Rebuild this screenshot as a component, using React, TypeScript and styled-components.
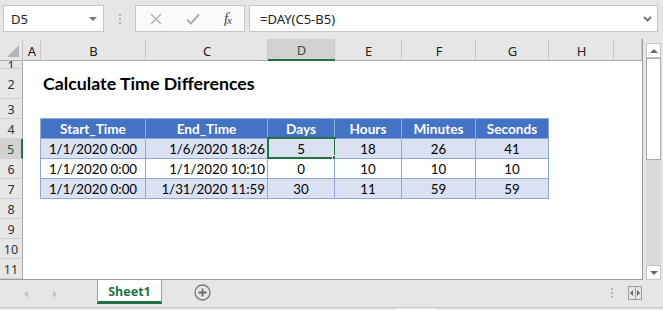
import React from "react";
import styled, { createGlobalStyle, css } from "styled-components";

const GREEN = "#217346";
const UI_FONT = `"Noto Sans", "Open Sans", sans-serif`;
const CELL_FONT = `Lato, "Liberation Sans", sans-serif`;
const GRID_COLS = "23px 18px 105px 122px 67px 67px 74px 73px 65px 1fr";

const GlobalStyle = createGlobalStyle`
	html, body {
		margin: 0;
		padding: 0;
		background: #e6e6e6;
		overflow: hidden;
	}
`;

const Window = styled.div`
	width: 663px;
	height: 310px;
	background: #e6e6e6;
	display: flex;
	flex-direction: column;
	font-family: ${UI_FONT};
`;

/* ---------- formula bar ---------- */

const FormulaBar = styled.div`
	height: 40px;
	box-sizing: border-box;
	padding: 5px 5px 0 3px;
	display: flex;
	align-items: flex-start;
`;

const Field = styled.div`
	height: 27px;
	box-sizing: border-box;
	background: #fff;
	border: 1px solid #c6c6c6;
	display: flex;
	align-items: center;
`;

const NameBox = styled(Field)`
	width: 101px;
	padding: 0 6px 0 7px;
	justify-content: space-between;
	font-size: 13px;
	color: #222;
`;

const Grip = styled.div`
	width: 31px;
	height: 27px;
	display: flex;
	flex-direction: column;
	align-items: center;
	justify-content: center;
	gap: 2px;
	span {
		width: 2px;
		height: 2px;
		background: #b4b4b4;
	}
`;

const FxBox = styled(Field)`
	width: 110px;
	background: #fafafa;
	padding: 0 13px 0 14px;
	justify-content: space-between;
`;

const FxLabel = styled.span`
	font-family: "Liberation Serif", serif;
	font-style: italic;
	font-size: 15px;
	color: #444;
	letter-spacing: -1px;
	sub {
		font-size: 11px;
		vertical-align: -1px;
	}
`;

const FormulaInput = styled(Field)`
	flex: 1;
	margin-left: 4px;
	padding: 0 5px 0 10px;
	justify-content: space-between;
	font-size: 13px;
	color: #222;
`;

/* ---------- sheet ---------- */

const Body = styled.div`
	display: flex;
	height: 241px;
`;

const Sheet = styled.div`
	width: 643px;
	box-sizing: border-box;
	border-right: 1px solid #9b9b9b;
	border-bottom: 1px solid #9b9b9b;
	background: #fff;
	display: flex;
	flex-direction: column;
	overflow: hidden;
`;

const Line = styled.div<{ $h: number }>`
	display: grid;
	grid-template-columns: ${GRID_COLS};
	height: ${p => p.$h}px;
	flex: none;
`;

const ColHead = styled.div<{ $sel?: boolean }>`
	background: ${p => (p.$sel ? "#d2d2d2" : "#e6e6e6")};
	box-sizing: border-box;
	border-bottom: ${p => (p.$sel ? `2px solid ${GREEN}` : "1px solid #ababab")};
	box-shadow: inset -1px 0 0 #c8c8c8;
	display: flex;
	align-items: center;
	justify-content: center;
	font-size: 13px;
	color: ${p => (p.$sel ? "#1c5a34" : "#222")};
	padding-top: 2px;
`;

const Corner = styled.div`
	background: #e6e6e6;
	box-sizing: border-box;
	border-bottom: 1px solid #ababab;
	border-right: 1px solid #c8c8c8;
	display: flex;
	align-items: flex-end;
	justify-content: flex-end;
	padding: 0 3px 3px 0;
`;

const RowHead = styled.div<{ $sel?: boolean }>`
	background: ${p => (p.$sel ? "#d2d2d2" : "#e6e6e6")};
	box-sizing: border-box;
	border-bottom: 1px solid #d0d0d0;
	border-right: ${p => (p.$sel ? `2px solid ${GREEN}` : "1px solid #ababab")};
	display: flex;
	align-items: center;
	justify-content: center;
	overflow: hidden;
	font-size: 12.5px;
	color: ${p => (p.$sel ? "#1c5a34" : "#333")};
	padding-top: 1px;
`;

const Blank = styled.div``;

const Title = styled.div`
	grid-column: 3 / span 3;
	display: flex;
	align-items: flex-end;
	padding: 0 0 5px 2px;
	white-space: nowrap;
	font-family: ${CELL_FONT};
	font-weight: 700;
	font-size: 17.8px;
	color: #000;
`;

const Cell = styled.div<{
	$align?: "center" | "right";
	$head?: boolean;
	$band?: boolean;
	$first?: boolean;
}>`
	position: relative;
	box-sizing: border-box;
	display: flex;
	align-items: center;
	justify-content: ${p => (p.$align === "right" ? "flex-end" : "center")};
	padding: 1px 2px 0 2px;
	white-space: nowrap;
	font-family: ${CELL_FONT};
	font-size: 13.3px;
	color: #000;
	background: ${p => (p.$head ? "#4472c4" : p.$band ? "#d9e1f2" : "#fff")};
	border-right: 1px solid #8ea9db;
	border-bottom: 1px solid #8ea9db;
	${p =>
		p.$head &&
		css`
			color: #fff;
			font-weight: 700;
			font-size: 13.6px;
		`}
	${p =>
		p.$first &&
		css`
			box-shadow: -1px 0 0 #8ea9db;
		`}
	${p =>
		p.$head &&
		p.$first &&
		css`
			box-shadow: -1px 0 0 #8ea9db, 0 -1px 0 #8ea9db, -1px -1px 0 #8ea9db;
		`}
	${p =>
		p.$head &&
		!p.$first &&
		css`
			box-shadow: 0 -1px 0 #8ea9db;
		`}
`;

const Selection = styled.div`
	position: absolute;
	left: -1px;
	right: -2px;
	top: -2px;
	bottom: -1px;
	border: 2px solid ${GREEN};
	pointer-events: none;
`;

const FillHandle = styled.div`
	position: absolute;
	right: -5px;
	bottom: -5px;
	width: 5px;
	height: 5px;
	background: ${GREEN};
	border: 1px solid #fff;
`;

/* ---------- scrollbar ---------- */

const ScrollCol = styled.div`
	flex: 1;
	padding: 4px 2px 0 3px;
	display: flex;
	flex-direction: column;
`;

const ScrollBtn = styled.div`
	height: 15px;
	box-sizing: border-box;
	background: #fff;
	border: 1px solid #c6c6c6;
	display: flex;
	align-items: center;
	justify-content: center;
	flex: none;
`;

const Track = styled.div`
	flex: 1;
	background: #dadada;
	display: flex;
	flex-direction: column;
	justify-content: space-between;
`;

const Thumb = styled.div`
	height: 102px;
	box-sizing: border-box;
	background: #fff;
	border: 1px solid #ababab;
`;

/* ---------- tabs ---------- */

const TabBar = styled.div`
	height: 27px;
	display: flex;
	align-items: stretch;
	padding-left: 20px;
	border-bottom: 1px solid #c6c6c6;
`;

const NavArrows = styled.div`
	width: 77px;
	display: flex;
	align-items: center;
	gap: 25px;
	padding-left: 4px;
	box-sizing: border-box;
`;

const Tab = styled.div`
	width: 65px;
	height: 24px;
	box-sizing: border-box;
	background: #fff;
	border-left: 1px solid #a0a0a0;
	border-right: 1px solid #a0a0a0;
	border-bottom: 3px solid ${GREEN};
	display: flex;
	align-items: center;
	justify-content: center;
	font-size: 12.5px;
	font-weight: 700;
	color: ${GREEN};
	padding-top: 1px;
`;

const AddSheet = styled.div`
	width: 80px;
	display: flex;
	align-items: center;
	justify-content: center;
	padding-bottom: 2px;
`;

const TabSpacer = styled.div`
	flex: 1;
`;

const TabTools = styled.div`
	display: flex;
	align-items: center;
	gap: 15px;
	padding-right: 21px;
	padding-bottom: 2px;
`;

const Dots = styled.div`
	display: flex;
	flex-direction: column;
	gap: 2px;
	span {
		width: 2px;
		height: 2px;
		background: #b4b4b4;
	}
`;

const SplitBox = styled.div`
	width: 14px;
	height: 14px;
	box-sizing: border-box;
	border: 1px solid #a0a0a0;
	display: flex;
	align-items: center;
	justify-content: space-between;
	padding: 0 1px;
`;

const SplitBar = styled.span`
	width: 1px;
	height: 12px;
	background: #a0a0a0;
`;

const BottomStrip = styled.div`
	height: 2px;
	display: flex;
	span {
		margin-left: 396px;
		width: 40px;
		background: #f2f2f2;
	}
`;

/* ---------- data ---------- */

const COLUMNS = ["A", "B", "C", "D", "E", "F", "G", "H", ""];
const HEADERS = ["Start_Time", "End_Time", "Days", "Hours", "Minutes", "Seconds"];
const DATA = [
	["1/1/2020 0:00", "1/6/2020 18:26", "5", "18", "26", "41"],
	["1/1/2020 0:00", "1/1/2020 10:10", "0", "10", "10", "10"],
	["1/1/2020 0:00", "1/31/2020 11:59", "30", "11", "59", "59"],
];

const Tri = ({ dir, color, size = 4 }: { dir: "up" | "down" | "left" | "right"; color: string; size?: number }) => {
	const pts = {
		up: `0,${size} ${size},0 ${size * 2},${size}`,
		down: `0,0 ${size * 2},0 ${size},${size}`,
		left: `${size},0 ${size},${size * 2} 0,${size}`,
		right: `0,0 0,${size * 2} ${size},${size}`,
	}[dir];
	const horiz = dir === "up" || dir === "down";
	return (
		<svg width={horiz ? size * 2 : size} height={horiz ? size : size * 2} style={{ flex: "none" }}>
			<polygon points={pts} fill={color} />
		</svg>
	);
};

const TableRow = ({ n, values, band, selCol }: { n: number; values: string[]; band?: boolean; selCol?: number }) => (
	<Line $h={20}>
		<RowHead $sel={selCol !== undefined}>{n}</RowHead>
		<Blank />
		{values.map((v, i) => (
			<Cell key={i} $band={band} $first={i === 0} $align={i === 1 ? "right" : "center"}>
				{v}
				{selCol === i && (
					<Selection>
						<FillHandle />
					</Selection>
				)}
			</Cell>
		))}
	</Line>
);

export default function App() {
	return (
		<Window>
			<GlobalStyle />
			<FormulaBar>
				<NameBox>
					<span>D5</span>
					<Tri dir="down" color="#777" size={4} />
				</NameBox>
				<Grip>
					<span />
					<span />
					<span />
				</Grip>
				<FxBox>
					<svg width="12" height="12" viewBox="0 0 12 12">
						<path d="M1 1 L11 11 M11 1 L1 11" stroke="#b0b0b0" strokeWidth="1.4" />
					</svg>
					<svg width="14" height="12" viewBox="0 0 14 12">
						<path d="M1 6.5 L5 10.5 L13 1.5" stroke="#b0b0b0" strokeWidth="2" fill="none" />
					</svg>
					<FxLabel>
						f<sub>x</sub>
					</FxLabel>
				</FxBox>
				<FormulaInput>
					<span>=DAY(C5-B5)</span>
					<svg width="9" height="6" viewBox="0 0 9 6">
						<path d="M1 1 L4.5 4.5 L8 1" stroke="#777" strokeWidth="2" fill="none" />
					</svg>
				</FormulaInput>
			</FormulaBar>

			<Body>
				<Sheet>
					<Line $h={22}>
						<Corner>
							<svg width="12" height="12">
								<polygon points="12,0 12,12 0,12" fill="#b4b4b4" />
							</svg>
						</Corner>
						{COLUMNS.map((c, i) => (
							<ColHead key={i} $sel={c === "D"}>
								{c}
							</ColHead>
						))}
					</Line>
					<Line $h={8}>
						<RowHead>1</RowHead>
					</Line>
					<Line $h={30}>
						<RowHead>2</RowHead>
						<Blank />
						<Title>Calculate Time Differences</Title>
					</Line>
					<Line $h={20}>
						<RowHead>3</RowHead>
					</Line>
					<Line $h={20}>
						<RowHead>4</RowHead>
						<Blank />
						{HEADERS.map((h, i) => (
							<Cell key={h} $head $first={i === 0}>
								{h}
							</Cell>
						))}
					</Line>
					<TableRow n={5} values={DATA[0]} band selCol={2} />
					<TableRow n={6} values={DATA[1]} />
					<TableRow n={7} values={DATA[2]} band />
					{[8, 9, 10, 11].map(n => (
						<Line key={n} $h={20}>
							<RowHead>{n}</RowHead>
						</Line>
					))}
				</Sheet>
				<ScrollCol>
					<ScrollBtn>
						<Tri dir="up" color="#6a6a6a" size={4} />
					</ScrollBtn>
					<Track>
						<Thumb />
						<ScrollBtn>
							<Tri dir="down" color="#6a6a6a" size={4} />
						</ScrollBtn>
					</Track>
				</ScrollCol>
			</Body>

			<TabBar>
				<NavArrows>
					<Tri dir="left" color="#c4c4c4" size={4} />
					<Tri dir="right" color="#c4c4c4" size={4} />
				</NavArrows>
				<Tab>Sheet1</Tab>
				<AddSheet>
					<svg width="17" height="17" viewBox="0 0 17 17">
						<circle cx="8.5" cy="8.5" r="7.5" fill="none" stroke="#7a7a7a" strokeWidth="1.3" />
						<path d="M8.5 4.5 V12.5 M4.5 8.5 H12.5" stroke="#6a6a6a" strokeWidth="1.8" />
					</svg>
				</AddSheet>
				<TabSpacer />
				<TabTools>
					<Dots>
						<span />
						<span />
						<span />
					</Dots>
					<SplitBox>
						<Tri dir="left" color="#6a6a6a" size={3} />
						<SplitBar />
						<Tri dir="right" color="#6a6a6a" size={3} />
					</SplitBox>
				</TabTools>
			</TabBar>
			<BottomStrip>
				<span />
			</BottomStrip>
		</Window>
	);
}
